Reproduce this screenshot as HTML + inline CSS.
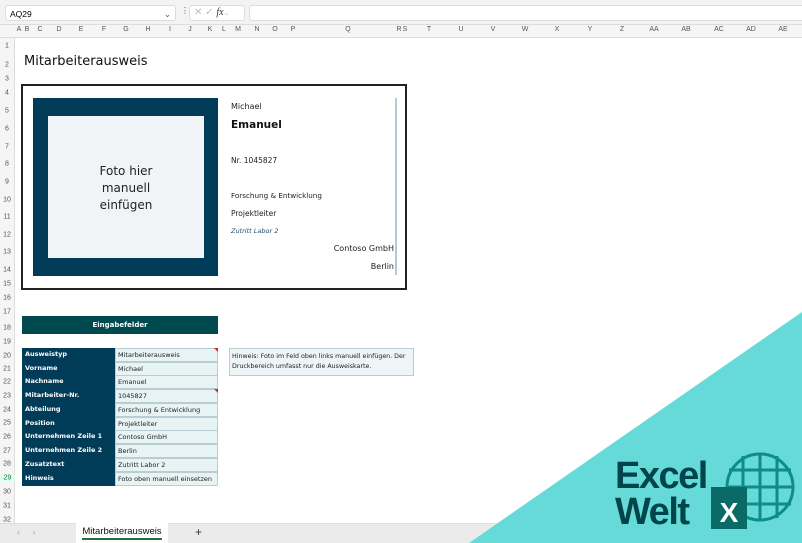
<!DOCTYPE html>
<html><head><meta charset="utf-8"><style>
*{margin:0;padding:0;box-sizing:border-box}
body{width:802px;height:543px;overflow:hidden;background:#fff;font-family:"Liberation Sans",sans-serif;position:relative}
.a{position:absolute}
.ch{position:absolute;top:26px;height:12px;font-size:7px;color:#555;transform:translateX(-50%)}
.rn{position:absolute;left:0;width:14px;text-align:center;font-size:7px;color:#555;transform:translateY(-50%)}
.cd{font-family:"DejaVu Sans",sans-serif;position:absolute;color:#222}
.lab{position:absolute;left:22px;width:93px;height:13.8px;color:#fff;font-weight:bold;font-size:6.5px;padding-left:3px;line-height:13.8px;font-family:"DejaVu Sans",sans-serif}
.val{position:absolute;left:115px;width:103px;height:13.8px;background:#e8f3f4;border:1px solid #b9cdd3;font-size:6.5px;padding-left:2px;line-height:12px;color:#222;font-family:"DejaVu Sans",sans-serif}
</style></head><body>
<div class="a" style="left:0;top:0;width:802px;height:25px;background:#f3f3f3;border-bottom:1px solid #ddd"></div>
<div class="a" style="left:5px;top:5px;width:171px;height:16px;background:#fff;border:1px solid #ddd;border-radius:3px;font-size:8.5px;padding:3px 4px">AQ29<span style="position:absolute;right:4px;color:#555">⌄</span></div>
<div class="a" style="left:181px;top:6px;font-size:8px;color:#555">⋮</div>
<div class="a" style="left:189px;top:5px;width:56px;height:16px;background:#fff;border:1px solid #ddd;border-radius:3px;font-size:10px;color:#bbb;padding:1px 4px">✕ ✓ <i style="color:#333;font-family:'Liberation Serif',serif">fx</i><span style="font-size:7px">⌄</span></div>
<div class="a" style="left:249px;top:5px;width:560px;height:16px;background:#fff;border:1px solid #ddd;border-radius:3px"></div>
<div class="a" style="left:0;top:25px;width:802px;height:13px;background:#f5f5f5;border-bottom:1px solid #ddd"></div>
<div class="a" style="left:0;top:38px;width:15px;height:485px;background:#f5f5f5;border-right:1px solid #ddd"></div>
<div class="ch" style="left:19px">A</div><div class="ch" style="left:27px">B</div><div class="ch" style="left:40px">C</div><div class="ch" style="left:59px">D</div><div class="ch" style="left:81px">E</div><div class="ch" style="left:104px">F</div><div class="ch" style="left:126px">G</div><div class="ch" style="left:148px">H</div><div class="ch" style="left:170px">I</div><div class="ch" style="left:190px">J</div><div class="ch" style="left:210px">K</div><div class="ch" style="left:224px">L</div><div class="ch" style="left:238px">M</div><div class="ch" style="left:257px">N</div><div class="ch" style="left:275px">O</div><div class="ch" style="left:293px">P</div><div class="ch" style="left:348px">Q</div><div class="ch" style="left:399px">R</div><div class="ch" style="left:405px">S</div><div class="ch" style="left:429px">T</div><div class="ch" style="left:461px">U</div><div class="ch" style="left:493px">V</div><div class="ch" style="left:525px">W</div><div class="ch" style="left:557px">X</div><div class="ch" style="left:590px">Y</div><div class="ch" style="left:622px">Z</div><div class="ch" style="left:654px">AA</div><div class="ch" style="left:686px">AB</div><div class="ch" style="left:719px">AC</div><div class="ch" style="left:751px">AD</div><div class="ch" style="left:783px">AE</div>
<div class="rn" style="top:46px">1</div><div class="rn" style="top:65px">2</div><div class="rn" style="top:79px">3</div><div class="rn" style="top:93px">4</div><div class="rn" style="top:111px">5</div><div class="rn" style="top:129px">6</div><div class="rn" style="top:147px">7</div><div class="rn" style="top:164px">8</div><div class="rn" style="top:182px">9</div><div class="rn" style="top:200px">10</div><div class="rn" style="top:217px">11</div><div class="rn" style="top:235px">12</div><div class="rn" style="top:252px">13</div><div class="rn" style="top:270px">14</div><div class="rn" style="top:284px">15</div><div class="rn" style="top:298px">16</div><div class="rn" style="top:312px">17</div><div class="rn" style="top:328px">18</div><div class="rn" style="top:342px">19</div><div class="rn" style="top:356px">20</div><div class="rn" style="top:369px">21</div><div class="rn" style="top:382px">22</div><div class="rn" style="top:396px">23</div><div class="rn" style="top:410px">24</div><div class="rn" style="top:423px">25</div><div class="rn" style="top:437px">26</div><div class="rn" style="top:451px">27</div><div class="rn" style="top:464px">28</div><div class="rn" style="top:478px;color:#217346;background:#dfe;width:15px">29</div><div class="rn" style="top:492px">30</div><div class="rn" style="top:506px">31</div><div class="rn" style="top:520px">32</div>
<div class="cd" style="left:24px;top:54px;font-size:13px;color:#111">Mitarbeiterausweis</div>
<div class="a" style="left:21px;top:84px;width:386px;height:206px;border:2px solid #222"></div>
<div class="a" style="left:33px;top:98px;width:185px;height:178px;background:#003b57"></div>
<div class="a" style="left:48px;top:116px;width:156px;height:142px;background:#f0f4f6;text-align:center;padding-top:47px;font-size:12px;line-height:17px;color:#222;font-family:'DejaVu Sans',sans-serif">Foto hier<br>manuell<br>einfügen</div>
<div class="a" style="left:395px;top:98px;width:2px;height:177px;background:#b8c8d0"></div>
<div class="cd" style="left:231px;top:102px;font-size:8px">Michael</div>
<div class="cd" style="left:231px;top:119px;font-size:10.5px;font-weight:bold;color:#111">Emanuel</div>
<div class="cd" style="left:231px;top:156px;font-size:7.5px">Nr. 1045827</div>
<div class="cd" style="left:231px;top:191px;font-size:7.2px">Forschung &amp; Entwicklung</div>
<div class="cd" style="left:231px;top:209px;font-size:7.5px">Projektleiter</div>
<div class="cd" style="left:231px;top:227px;font-size:6.5px;font-style:italic;color:#1a4e6e">Zutritt Labor 2</div>
<div class="cd" style="right:408px;top:244px;font-size:8px">Contoso GmbH</div>
<div class="cd" style="right:408px;top:262px;font-size:8px">Berlin</div>
<div class="a" style="left:22px;top:316px;width:196px;height:18px;background:#00494f;color:#fff;font-size:7px;font-weight:bold;text-align:center;line-height:18px;font-family:'DejaVu Sans',sans-serif">Eingabefelder</div>
<div class="a" style="left:22px;top:348px;width:93px;height:138px;background:#003b57"></div>
<div class="lab" style="top:348px">Ausweistyp</div><div class="val" style="top:348px">Mitarbeiterausweis</div>
<div class="lab" style="top:362px">Vorname</div><div class="val" style="top:362px">Michael</div>
<div class="lab" style="top:375px">Nachname</div><div class="val" style="top:375px">Emanuel</div>
<div class="lab" style="top:389px">Mitarbeiter-Nr.</div><div class="val" style="top:389px">1045827</div>
<div class="lab" style="top:403px">Abteilung</div><div class="val" style="top:403px">Forschung &amp; Entwicklung</div>
<div class="lab" style="top:417px">Position</div><div class="val" style="top:417px">Projektleiter</div>
<div class="lab" style="top:430px">Unternehmen Zeile 1</div><div class="val" style="top:430px">Contoso GmbH</div>
<div class="lab" style="top:444px">Unternehmen Zeile 2</div><div class="val" style="top:444px">Berlin</div>
<div class="lab" style="top:458px">Zusatztext</div><div class="val" style="top:458px">Zutritt Labor 2</div>
<div class="lab" style="top:472px">Hinweis</div><div class="val" style="top:472px">Foto oben manuell einsetzen</div>
<div class="a" style="left:214px;top:348px;border-left:4px solid transparent;border-top:4px solid #e02020"></div>
<div class="a" style="left:214px;top:389px;border-left:4px solid transparent;border-top:4px solid #e02020"></div>
<div class="a" style="left:229px;top:348px;width:185px;height:28px;background:#eef5f6;border:1px solid #b9cdd3;font-size:6.3px;line-height:10px;padding:3px 2px;color:#222;font-family:'DejaVu Sans',sans-serif">Hinweis: Foto im Feld oben links manuell einfügen. Der Druckbereich umfasst nur die Ausweiskarte.</div>
<div class="a" style="left:0;top:523px;width:802px;height:20px;background:#ebebeb;border-top:1px solid #ddd"></div>
<div class="a" style="left:17px;top:527px;font-size:9px;color:#aaa">‹ &nbsp; &nbsp; ›</div>
<div class="a" style="left:76px;top:523px;width:92px;height:20px;background:#fff;font-size:9.5px;text-align:center;padding-top:3px;color:#111">Mitarbeiterausweis<div style="margin:1px auto 0;width:80px;height:2px;background:#217346"></div></div>
<div class="a" style="left:195px;top:525px;font-size:12px;color:#333">+</div>
<svg class="a" style="left:0;top:0" width="802" height="543">
<polygon points="469,543 802,312 802,543" fill="#66dad9"/>
<g fill="none" stroke="#0d8c88" stroke-width="3">
<circle cx="760" cy="487" r="33"/>
<line x1="743" y1="456" x2="743" y2="518"/><line x1="760" y1="454" x2="760" y2="520"/><line x1="777" y1="456" x2="777" y2="518"/>
<line x1="729" y1="470" x2="791" y2="470"/><line x1="727" y1="487" x2="793" y2="487"/><line x1="729" y1="504" x2="791" y2="504"/>
</g>
<rect x="711" y="487" width="36" height="42" fill="#0a6b66"/>
<text x="729" y="522" text-anchor="middle" font-family="Liberation Sans" font-weight="bold" font-size="28" fill="#fff">X</text>
<text x="615" y="488" font-family="Liberation Sans" font-weight="bold" font-size="38" fill="#00454a" letter-spacing="-1.5">Excel</text>
<text x="615" y="524" font-family="Liberation Sans" font-weight="bold" font-size="38" fill="#00454a" letter-spacing="-1.5">Welt</text>
</svg>
</body></html>
